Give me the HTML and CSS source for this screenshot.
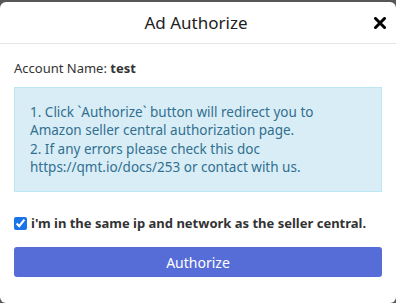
FILE: index.html
```html
<!DOCTYPE html>
<html lang="en">
  <head>
    <meta charset="UTF-8" />
    <meta name="viewport" content="width=device-width, initial-scale=1.0" />
    <title>Ad Authorize</title>
    <link rel="stylesheet" href="styles.css">
  </head>
  <body>
    <div class="modal">
      <div class="modal-header">
        <h4 class="modal-title">Ad Authorize</h4>
        <button class="close" type="button" aria-label="Close">
          <svg width="12" height="12" viewBox="0 0 12 12">
            <path d="M1.5 1.5 L10.5 10.5 M10.5 1.5 L1.5 10.5" stroke="#000" stroke-width="3" stroke-linecap="square" />
          </svg>
        </button>
      </div>
      <div class="modal-body">
        <p class="account">Account Name: <b>test</b></p>
        <div class="alert">
          1. Click `Authorize` button will redirect you to<br>
          Amazon seller central authorization page.<br>
          2. If any errors please check this doc<br>
          https://qmt.io/docs/253 or contact with us.
        </div>
        <label class="check">
          <input type="checkbox" checked>
          <span>i'm in the same ip and network as the seller central.</span>
        </label>
        <button class="btn-authorize" type="button">Authorize</button>
      </div>
    </div>
  </body>
</html>
```

FILE: styles.css
```css
body {
    margin: 0;
    background-color: #575757;
    font-family: "Noto Sans", "Open Sans", sans-serif;
    color: #333;
    height: 303px;
    overflow: hidden;
}
.modal {
    background-color: #fff;
    margin-top: 2px;
    height: 301px;
    border-radius: 6px;
    box-sizing: border-box;
}
.modal-header {
    display: flex;
    align-items: center;
    justify-content: center;
    position: relative;
    height: 41px;
    border-bottom: 1px solid #e5e5e5;
}
.modal-title {
    margin: 0 0 0 -4px;
    font-size: 17px;
    font-weight: normal;
    color: #222;
}
.close {
    position: absolute;
    right: 10px;
    top: 15px;
    background: none;
    border: none;
    padding: 0;
    line-height: 0;
}
.modal-body {
    padding: 14px 14px 0;
}
.account {
    margin: 0 0 9px;
    font-size: 13px;
    line-height: 20px;
}
.alert {
    background-color: #d9edf7;
    border: 1px solid #bce8f1;
    color: #31708f;
    padding: 15px 15px 15px;
    font-size: 13.5px;
    line-height: 18.3px;
}
.check {
    display: flex;
    align-items: center;
    gap: 4px;
    margin-top: 22px;
    font-size: 13px;
    font-weight: bold;
    color: #333;
}
.check input {
    margin: 0;
    width: 13px;
    height: 13px;
    accent-color: #1a73e8;
}
.btn-authorize {
    display: block;
    width: 100%;
    height: 30px;
    margin-top: 15px;
    border: none;
    border-radius: 3px;
    background-color: #566cd6;
    color: #fff;
    font-family: inherit;
    font-size: 14px;
}
```
